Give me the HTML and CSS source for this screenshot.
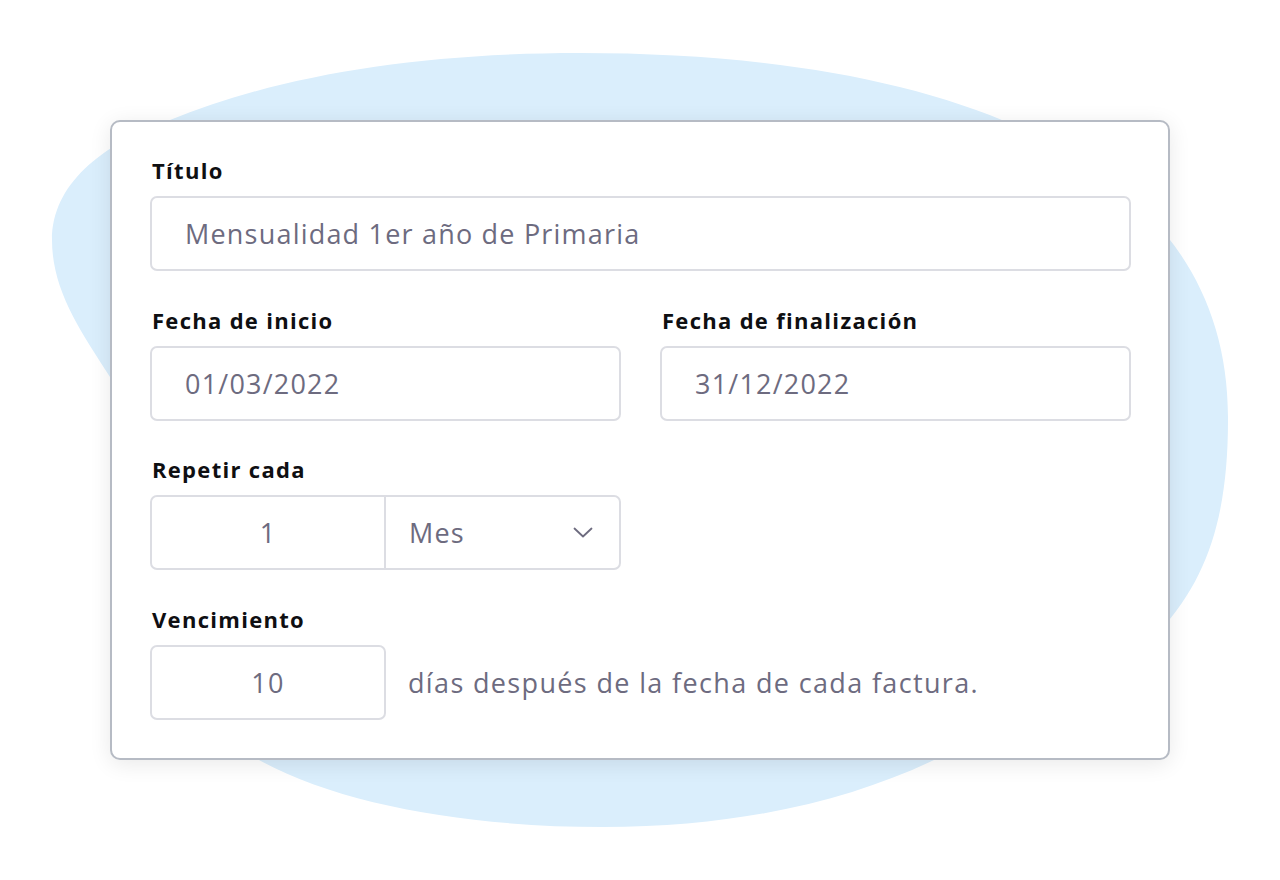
FILE: index.html
```html
<!DOCTYPE html>
<html lang="es">
<head>
<meta charset="utf-8">
<title>Factura recurrente</title>
<link rel="stylesheet" href="styles.css">
</head>
<body>
<div class="stage">
  <svg class="blob" width="1280" height="880" viewBox="0 0 1280 880" aria-hidden="true">
    <path d="M580 53 C950 53 1230 160 1228 420 C1228 590 1165 675 934 760 C850 800 740 827 603 827 C470 827 340 805 259 760 C180 715 120 500 110 377 C80 330 52 290 52 240 C52 185 100 145 170 120 C280 75 420 53 580 53 Z" fill="#daeefc"/>
  </svg>
  <div class="card">
    <div class="field">
      <div class="label">Título</div>
      <div class="input">Mensualidad 1er año de Primaria</div>
    </div>
    <div class="row2">
      <div class="field">
        <div class="label">Fecha de inicio</div>
        <div class="input">01/03/2022</div>
      </div>
      <div class="field">
        <div class="label">Fecha de finalización</div>
        <div class="input">31/12/2022</div>
      </div>
    </div>
    <div class="field">
      <div class="label">Repetir cada</div>
      <div class="split">
        <div class="split-num">1</div>
        <div class="split-select">
          <span>Mes</span>
          <svg class="chevron" width="20" height="11" viewBox="0 0 20 11"><polyline points="1.5,1.5 10,9.5 18.5,1.5" fill="none" stroke="#6d6b7f" stroke-width="1.8" stroke-linecap="round" stroke-linejoin="round"/></svg>
        </div>
      </div>
    </div>
    <div class="field">
      <div class="label">Vencimiento</div>
      <div class="inline">
        <div class="input input-num">10</div>
        <span class="hint">días después de la fecha de cada factura.</span>
      </div>
    </div>
  </div>
</div>
</body>
</html>
```
FILE: styles.css
```css
* { box-sizing: border-box; }
html, body { margin: 0; padding: 0; background: #ffffff; }
body { font-family: "Open Sans", "Liberation Sans", sans-serif; }

.stage {
  position: relative;
  width: 1280px;
  height: 880px;
  padding: 120px 0 0 110px;
  overflow: hidden;
}

.blob {
  position: absolute;
  left: 0;
  top: 0;
}

.card {
  position: relative;
  width: 1060px;
  height: 640px;
  background: #ffffff;
  border: 2px solid #b6bbc4;
  border-radius: 10px;
  box-shadow: 0 4px 22px rgba(0, 0, 0, 0.09);
  padding: 35px 37px 0 38px;
  display: flex;
  flex-direction: column;
  gap: 35.5px;
}

.field {
  display: flex;
  flex-direction: column;
  gap: 13px;
}

.label {
  font-size: 22px;
  line-height: 26px;
  font-weight: 700;
  letter-spacing: 1.3px;
  color: #0f0f12;
  padding-left: 2px;
}

.input {
  height: 75px;
  border: 2px solid #dcdde3;
  border-radius: 7px;
  padding-left: 33px;
  display: flex;
  align-items: center;
  font-size: 27px;
  letter-spacing: 1.2px;
  color: #6d6b7f;
}

.row2 {
  display: grid;
  grid-template-columns: 1fr 1fr;
  column-gap: 39px;
}

.split {
  width: 471px;
  height: 75px;
  border: 2px solid #dcdde3;
  border-radius: 7px;
  display: flex;
  font-size: 27px;
  letter-spacing: 1.2px;
  color: #6d6b7f;
}

.split-num {
  width: 234px;
  border-right: 2px solid #dcdde3;
  display: flex;
  align-items: center;
  justify-content: center;
}

.split-select {
  flex: 1;
  display: flex;
  align-items: center;
  justify-content: space-between;
  padding: 0 26px 0 23px;
}

.chevron { display: block; }

.inline {
  display: flex;
  align-items: center;
  gap: 22px;
}

.input-num {
  width: 236px;
  padding-left: 0;
  justify-content: center;
}

.hint {
  font-size: 27px;
  letter-spacing: 1.35px;
  color: #6d6b7f;
}
```
